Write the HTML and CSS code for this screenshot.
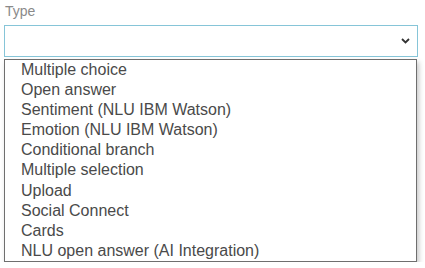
FILE: index.html
```html
<!DOCTYPE html>
<html>
<head>
<meta charset="utf-8">
<link rel="stylesheet" href="styles.css">
</head>
<body>
<div class="field">
  <div class="label">Type</div>
  <div class="select">
    <svg class="chev" width="9" height="6" viewBox="0 0 9 6"><path d="M1 1 L4.5 4.5 L8 1" fill="none" stroke="#333" stroke-width="1.8"/></svg>
  </div>
  <ul class="list">
    <li>Multiple choice</li>
    <li>Open answer</li>
    <li>Sentiment (NLU IBM Watson)</li>
    <li>Emotion (NLU IBM Watson)</li>
    <li>Conditional branch</li>
    <li>Multiple selection</li>
    <li>Upload</li>
    <li>Social Connect</li>
    <li>Cards</li>
    <li>NLU open answer (AI Integration)</li>
  </ul>
</div>
</body>
</html>
```
FILE: styles.css
```css
html, body {
  margin: 0;
  padding: 0;
  background: #ffffff;
}
body {
  font-family: "Liberation Sans", Arial, sans-serif;
}
.field {
  padding: 0 7px 0 4px;
}
.label {
  font-size: 14px;
  line-height: 20px;
  color: #8a8a8a;
  padding: 1px 0 0 1px;
  margin-bottom: 4px;
}
.select {
  box-sizing: border-box;
  height: 32px;
  border: 1px solid #86c5d8;
  display: flex;
  align-items: center;
  justify-content: flex-end;
  padding-right: 7px;
}
.chev {
  display: block;
}
.list {
  list-style: none;
  margin: 2px 1px 0 0;
  padding: 0;
  border: 1px solid #6f6f6f;
  box-shadow: 2px 3px 5px rgba(0, 0, 0, 0.22);
  background: #fff;
}
.list li {
  font-size: 16px;
  line-height: 20.1px;
  height: 20.1px;
  color: #4a4a4a;
  padding-left: 16px;
}
```
